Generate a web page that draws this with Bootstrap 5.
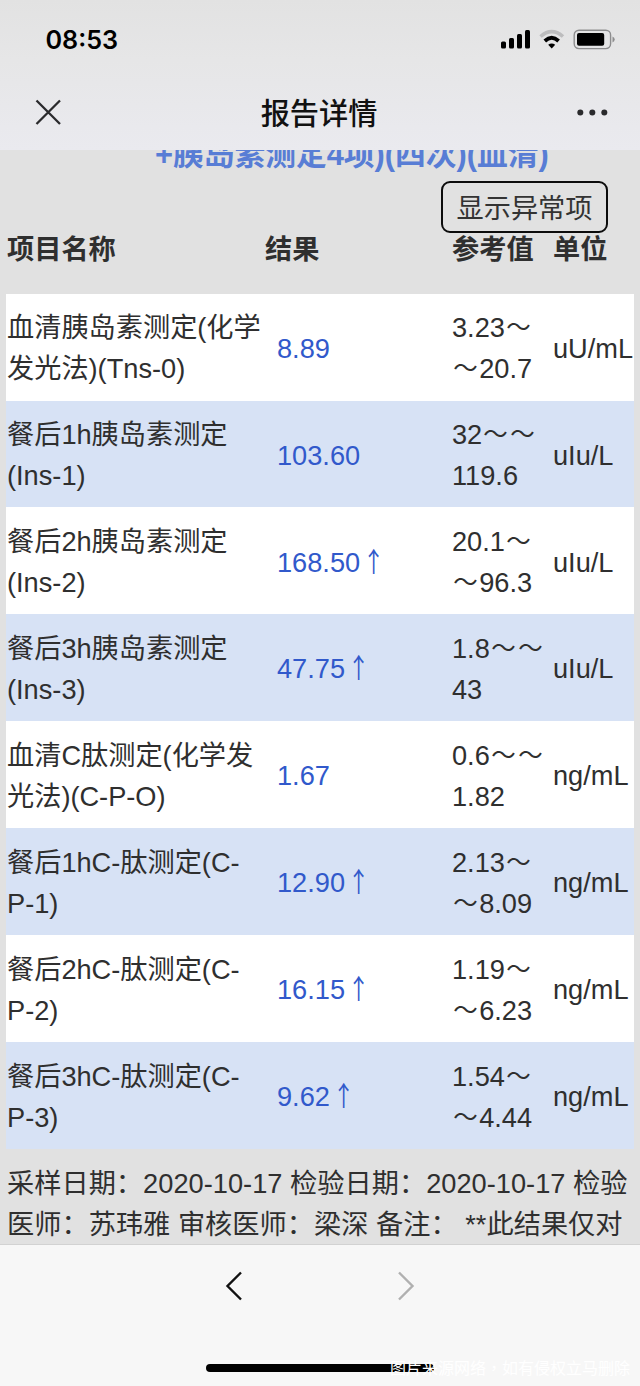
<!DOCTYPE html>
<html lang="zh-CN">
<head>
<meta charset="utf-8">
<meta name="viewport" content="width=device-width, initial-scale=1">
<title>报告详情</title>
<link href="https://cdn.jsdelivr.net/npm/bootstrap@5.3.0/dist/css/bootstrap.min.css" rel="stylesheet">
<style>
body{font-family:"Liberation Sans","Noto Sans CJK SC",sans-serif;font-size:27.2px;line-height:40.8px;color:#2f2f2f;background:#e1e1e1;height:1386px}
.topbar{height:150px;background:linear-gradient(#e2e2e2,#e6e6e7 40%,#eaeaef)}
.statusrow{height:78px;padding:1px 25px 0 45.5px}
.clock{font:600 25.2px/1 Inter,sans-serif;color:#000;padding-top:2px}
.titlerow{height:72px;padding:0 32px 4px 35px}
.pagetitle{font:500 29.2px/1 "Noto Sans CJK SC",sans-serif;color:#111}
.report{padding:0 6px}
.groupname{font-size:30.75px;line-height:40px;color:#587dd5;margin:-15.5px 0 6.5px 149px}
.btn-filter{border:2px solid #0c0c0c;border-radius:9px;font-size:27.2px;line-height:40px;width:167px;height:52px;padding:4px 0 0;color:#333;margin-right:26px}
.headrow{height:60.6px;line-height:33px}
.datarow{height:106.93px;background:#fff;padding-top:4px}
.datarow:nth-child(odd){background:#d7e2f5}
.cname{width:259px;padding-left:1px}
.cres{width:187px;padding-left:12px;color:#3159cb}
.headrow .cres{padding-left:0;color:inherit}
.cref{width:101px}
.tld{display:inline-block;width:27.2px;line-height:1;text-align:center;transform:translate(0,-.5px) scale(.9)}
.up{display:inline-block;font-family:"Noto Sans CJK SC",sans-serif;line-height:1;transform:translateY(-.5px) scaleX(.8)}
.notes{padding:15.4px 0 0 1px;letter-spacing:.03px}
.bottombar{height:142px;background:#f7f7f7;border-top:1px solid #d2d2d2}
.navrow{padding:26px 0 0 223px;gap:150px}
.homebar{width:228px;height:8px;border-radius:4px;background:#000;left:206px;bottom:14px}
.source{font:16px/20px "Noto Sans CJK SC",sans-serif;color:#fff;left:390px;bottom:9px}
.midcomma{font-family:"Noto Sans CJK TC",sans-serif}
</style>
</head>
<body class="d-flex flex-column overflow-hidden">
<header class="topbar flex-shrink-0">
  <div class="statusrow d-flex align-items-center justify-content-between">
    <span class="clock">08:53</span>
    <div class="d-flex align-items-center">
      <svg width="115" height="22" viewBox="0 0 115 22">
        <g fill="#000"><rect x="1" y="12.5" width="5" height="7" rx="1.5"/><rect x="9" y="9" width="5" height="10.5" rx="1.5"/><rect x="17" y="5" width="5" height="14.5" rx="1.5"/><rect x="25" y="1" width="5" height="18.5" rx="1.5"/></g>
        <g fill="none"><path d="M40.5 7.5Q51.7-2.2 63 7.5" stroke="#bdbdbe" stroke-width="3.6"/><path d="M44.8 12Q51.7 5.7 58.6 12" stroke="#000" stroke-width="3.8"/></g>
        <path d="M48.2 15.8Q51.7 13 55.2 15.8L51.7 19.4Z" fill="#000"/>
        <rect x="74.2" y="1.2" width="36.4" height="18.4" rx="4.8" fill="none" stroke="#8d8d8e" stroke-width="1.4"/><rect x="77" y="4" width="27.2" height="12.8" rx="2" fill="#000"/><path d="M112.5 7.5q2.2.8 2.2 3t-2.2 3z" fill="#8d8d8e"/>
      </svg>
    </div>
  </div>
  <div class="titlerow d-flex align-items-center justify-content-between">
    <svg width="27" height="27" viewBox="0 0 27 27" fill="none" stroke="#2a2a2c" stroke-width="2.3"><path d="M1.5 1.5l23.5 23.5M25 1.5L1.5 25"/></svg>
    <h1 class="pagetitle m-0">报告详情</h1>
    <svg width="32" height="8" viewBox="0 0 32 8" fill="#2a2a2c"><circle cx="4.3" cy="4.5" r="3"/><circle cx="16.3" cy="4.5" r="3"/><circle cx="28.3" cy="4.5" r="3"/></svg>
  </div>
</header>
<main class="report flex-grow-1 overflow-hidden">
  <h2 class="groupname fw-bold text-nowrap">+胰岛素测定4项)(四次)(血清)</h2>
  <div class="d-flex justify-content-end"><button class="btn btn-filter">显示异常项</button></div>
  <section class="text-nowrap">
    <div class="headrow d-flex fw-bold"><div class="cname">项目名称</div><div class="cres">结果</div><div class="cref">参考值</div><div>单位</div></div>
    <div class="datarow d-flex align-items-center"><div class="cname">血清胰岛素测定(化学<br>发光法)(Tns-0)</div><div class="cres">8.89</div><div class="cref">3.23<span class="tld">～</span><br><span class="tld">～</span>20.7</div><div>uU/mL</div></div>
    <div class="datarow d-flex align-items-center"><div class="cname">餐后1h胰岛素测定<br>(Ins-1)</div><div class="cres">103.60</div><div class="cref">32<span class="tld">～</span><span class="tld">～</span><br>119.6</div><div>uIu/L</div></div>
    <div class="datarow d-flex align-items-center"><div class="cname">餐后2h胰岛素测定<br>(Ins-2)</div><div class="cres">168.50<span class="up">↑</span></div><div class="cref">20.1<span class="tld">～</span><br><span class="tld">～</span>96.3</div><div>uIu/L</div></div>
    <div class="datarow d-flex align-items-center"><div class="cname">餐后3h胰岛素测定<br>(Ins-3)</div><div class="cres">47.75<span class="up">↑</span></div><div class="cref">1.8<span class="tld">～</span><span class="tld">～</span><br>43</div><div>uIu/L</div></div>
    <div class="datarow d-flex align-items-center"><div class="cname">血清C肽测定(化学发<br>光法)(C-P-O)</div><div class="cres">1.67</div><div class="cref">0.6<span class="tld">～</span><span class="tld">～</span><br>1.82</div><div>ng/mL</div></div>
    <div class="datarow d-flex align-items-center"><div class="cname">餐后1hC-肽测定(C-<br>P-1)</div><div class="cres">12.90<span class="up">↑</span></div><div class="cref">2.13<span class="tld">～</span><br><span class="tld">～</span>8.09</div><div>ng/mL</div></div>
    <div class="datarow d-flex align-items-center"><div class="cname">餐后2hC-肽测定(C-<br>P-2)</div><div class="cres">16.15<span class="up">↑</span></div><div class="cref">1.19<span class="tld">～</span><br><span class="tld">～</span>6.23</div><div>ng/mL</div></div>
    <div class="datarow d-flex align-items-center"><div class="cname">餐后3hC-肽测定(C-<br>P-3)</div><div class="cres">9.62<span class="up">↑</span></div><div class="cref">1.54<span class="tld">～</span><br><span class="tld">～</span>4.44</div><div>ng/mL</div></div>
  </section>
  <p class="notes m-0 text-nowrap">采样日期：2020-10-17 检验日期：2020-10-17 检验<br>医师：苏玮雅 审核医师：梁深 备注： **此结果仅对</p>
</main>
<footer class="bottombar flex-shrink-0 position-relative">
  <nav class="navrow d-flex">
    <svg width="22" height="30" viewBox="0 0 22 30" fill="none" stroke="#111" stroke-width="2.4"><path d="M18 1.5L4.5 15 18 28.5"/></svg>
    <svg width="22" height="30" viewBox="0 0 22 30" fill="none" stroke="#b0b0b0" stroke-width="2.4"><path d="M4 1.5L17.5 15 4 28.5"/></svg>
  </nav>
  <div class="homebar position-absolute"></div>
  <div class="source position-absolute text-nowrap">图片来源网络<span class="midcomma" lang="zh-TW">，</span>如有侵权立马删除</div>
</footer>
<script src="https://cdn.jsdelivr.net/npm/bootstrap@5.3.0/dist/js/bootstrap.bundle.min.js"></script>
</body>
</html>
